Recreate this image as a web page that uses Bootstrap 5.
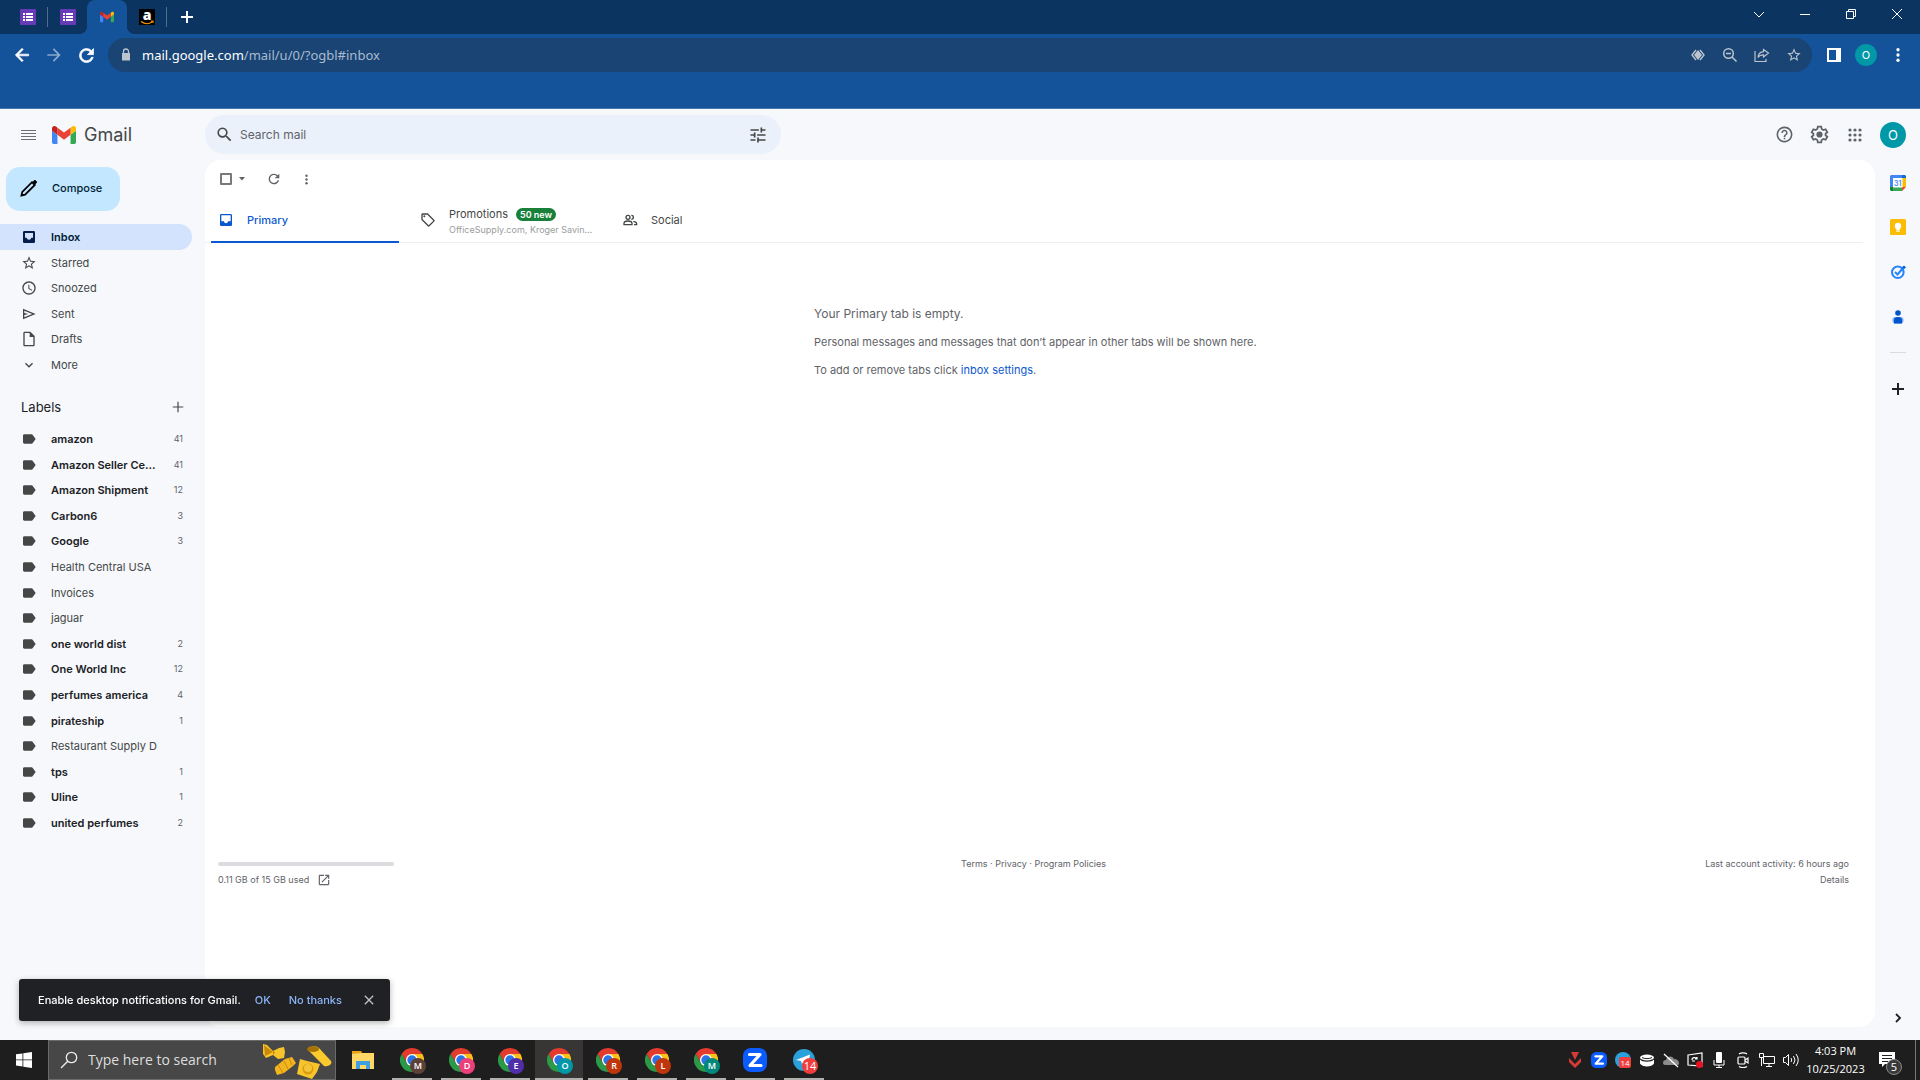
<!DOCTYPE html>
<html lang="en">
<head>
<meta charset="utf-8">
<meta name="viewport" content="width=device-width, initial-scale=1">
<title>Inbox - Gmail</title>
<link href="https://cdn.jsdelivr.net/npm/bootstrap@5.3.0/dist/css/bootstrap.min.css" rel="stylesheet">
<style>
  body { font-family: Inter, Roboto, "Liberation Sans", sans-serif; font-size: 11px; line-height: 16px; color: #444746; background: #f6f8fc; overflow: hidden; }
  svg { display: block; flex: none; }
  a { text-decoration: none; color: inherit; }
  .os-font { font-family: "Open Sans", "Noto Sans", sans-serif; }
  .ic { width: 16px; height: 16px; fill: currentColor; }
  .ic.ln { fill: none; }
  .ic-14 { width: 14px; height: 14px; fill: currentColor; }
  .ic-20 { width: 20px; height: 20px; fill: currentColor; }
  .icon-btn { display: inline-flex; align-items: center; justify-content: center; flex: none; padding: 0; border: 0; background: none; color: inherit; position: relative; }
  .face { border-radius: 50%; background: #0097a7; color: #fff; display: flex; align-items: center; justify-content: center; flex: none; }

  /* browser frame */
  .tab-strip { height: 34px; background: #0b3560; color: #fff; padding-left: 8px; }
  .tab-btn { width: 39px; height: 34px; }
  .tab-sep { width: 1px; height: 20px; background: #4f6e8d; }
  .tab-on { width: 40px; background: #14539a; border-radius: 8px 8px 0 0; }
  .tab-on::before, .tab-on::after { content: ""; position: absolute; bottom: 0; width: 8px; height: 8px; }
  .tab-on::before { right: 100%; background: radial-gradient(circle at 0 0, transparent 8px, #14539a 8px); }
  .tab-on::after { left: 100%; background: radial-gradient(circle at 100% 0, transparent 8px, #14539a 8px); }
  .win-btn { width: 46px; height: 28px; }
  .tool-strip { background: #14539a; color: #fff; height: 75px; padding: 4px 6px 0; border-bottom: 1px solid #4376ae; }
  .nav-btn { width: 32px; height: 34px; }
  .omni { height: 34px; border-radius: 17px; background: #194474; color: #bcc4cd; padding: 0 2px 0 10px; margin: 0 2px 0 6px; }
  .url-text { font-family: "Noto Sans", "Open Sans", sans-serif; font-size: 13px; color: #a9bbd0; }
  .url-text b { font-weight: 400; color: #fff; }

  /* mail header */
  .mail-head { height: 51px; padding-right: 14px; }
  .brand-side { width: 205px; padding-left: 20px; }
  .brand-name { font-size: 18px; color: #444746; }
  .search-pill { width: 576px; height: 39px; border-radius: 20px; background: #eaf1fb; padding: 0 13px 0 10px; }
  .search-pill input { border: 0; background: none; outline: 0; font-size: 12px; color: #444746; }
  .search-pill input::placeholder { color: #5f6368; opacity: 1; }
  .head-btn { width: 35px; height: 35px; color: #5f6368; }

  /* side navigation */
  .side-nav { width: 205px; flex: none; }
  .compose { width: 114px; height: 44px; border-radius: 14px; background: #c2e7ff; color: #001d35; margin: 7px 0 13px 6px; padding: 0 0 2px 14px; gap: 14px; font-weight: 500; border: 0; }
  .nav-rows a { height: 26px; width: 192px; padding: 0 9px 0 21px; gap: 14px; border-radius: 0 13px 13px 0; display: flex; align-items: center; }
  .nav-rows li:nth-child(5n+2) a, .nav-rows li:nth-child(5n+4) a { height: 25px; }
  .nav-rows .on { background: #d3e3fd; color: #001d35; font-weight: 600; }
  .nav-rows .unread { color: #202124; font-weight: 600; }
  .nav-rows .num { font-size: 9px; font-weight: 400; color: #5f6368; }
  .nav-rows svg { color: #444746; }
  .nav-rows .on svg { color: #041e49; }
  .labels-head { padding: 0 20px 0 21px; margin: 15px 0 6px; height: 27px; font-size: 13px; color: #202124; }

  /* message panel */
  .panel { background: #fff; border-radius: 16px; margin-bottom: 13px; padding-right: 12px; }
  .list-tools { height: 38px; padding-left: 15px; color: #5f6368; }
  .list-tools input { appearance: none; width: 12px; height: 12px; border: 2px solid #777a7d; border-radius: 1px; margin: 0 7px 0 0; background: #fff; }
  .list-tools .again { margin: 0 18px 0 21px; }
  .cat-tabs { height: 45px; border-bottom: 1px solid #eceff1; padding-left: 6px; gap: 14px; }
  .cat-tab { width: 188px; height: 45px; border: 0; background: none; padding: 0 8px 0 7px; gap: 13px; color: #444746; text-align: left; border-bottom: 2px solid transparent; font-weight: 400; }
  .cat-tab.on { color: #0b57d0; border-color: #0b57d0; font-weight: 500; }
  .new-pill { font-size: 9px; line-height: 13px; background: #188038; color: #fff; border-radius: 7px; padding: 0 4px; font-weight: 600; }
  .tab-sub { font-size: 9px; line-height: 15px; color: #9a9c9e; font-weight: 400; white-space: nowrap; }
  .empty-note { width: 440px; margin: 63px auto 0; color: #5f6368; white-space: nowrap; }
  .empty-note p { margin-bottom: 12px; }
  .empty-note .first { font-size: 12px; }
  .empty-note a { color: #0b57d0; }
  .panel-foot { font-size: 9px; color: #5f6368; padding: 0 14px 0 13px; margin-bottom: 139px; }
  .quota { width: 176px; height: 4px; border-radius: 2px; background: #dadce0; margin: 6px 0; }

  .rail { width: 45px; flex: none; padding-bottom: 13px; }
  .rail .icon-btn { width: 45px; height: 45px; }
  .rail .icon-btn:nth-child(2) { height: 44px; }
  .rail .icon-btn:last-child { height: 18px; }
  .rail-line { width: 16px; height: 1px; background: #dadce0; margin: 13px 0; }

  .notice { left: 19px; bottom: 59px; width: 371px; height: 42px; border-radius: 3px; background: #202124; color: #fff; padding: 0 13px 0 19px; box-shadow: 0 2px 6px rgba(0,0,0,.3); font-weight: 500; }
  .notice button { border: 0; background: none; padding: 0; color: #8ab4f8; font-weight: 500; }
  .notice .ok-btn { margin: 0 18px 0 14px; }
  .notice .close-x { color: #bdc1c6; margin-left: auto; }

  /* desktop task bar */
  .task-bar { height: 40px; background: #1f1e1e; color: #fff; }
  .start-btn { width: 48px; height: 40px; }
  .task-search { width: 288px; height: 40px; border: 1px solid #6a6a6a; background: #474747; padding: 0 3px 0 11px; margin-right: 3px; }
  .task-search input { border: 0; background: none; outline: 0; font-size: 14px; color: #e4e4e4; min-width: 0; }
  .task-search input::placeholder { color: #dedede; opacity: 1; }
  .app-btn { width: 48px; height: 40px; margin-right: 1px; }
  .app-btn.run::after { content: ""; position: absolute; left: 4px; right: 4px; bottom: 0; height: 2px; background: #b3b1ae; }
  .app-btn.on { background: #373635; }
  .app-btn.on::after { left: 0; right: 0; }
  .chip { position: absolute; left: 22px; top: 18px; width: 16px; height: 16px; font-size: 9px; font-weight: 600; }
  .chip-m { background: #5d4037; }
  .chip-d { background: #ec407a; }
  .chip-e { background: #512da8; }
  .chip-r { background: #bf360c; }
  .chip-g { background: #00897b; }
  .chip-n { background: #f03e3e; font-size: 11px; font-weight: 400; }
  .tray-btn { width: 24px; height: 40px; }
  .clock { width: 65px; font-size: 11px; line-height: 18px; }
  .note-btn { width: 48px; height: 40px; border-right: 1px solid #777; padding-right: 10px; margin-right: 4px; }
  .count-5 { position: absolute; left: 18px; top: 19px; width: 16px; height: 16px; background: #3a3a3a; border: 1px solid #8a8a8a; font-size: 11px; }
  .size-22 { width: 22px; height: 22px; }
  .size-26 { width: 26px; height: 26px; font-size: 13px; }
</style>
</head>
<body class="d-flex flex-column vh-100">

<svg width="0" height="0" class="position-absolute" aria-hidden="true">
  <symbol id="i-form" viewBox="0 0 16 16"><rect width="16" height="16" rx="1" fill="#673ab7"/><path fill="#fff" d="M3 4h2v2H3zM6 4h7v2H6zM3 7h2v2H3zM6 7h7v2H6zM3 10h2v2H3zM6 10h7v2H6z"/></symbol>
  <symbol id="i-gmail" viewBox="52 42 88 66"><path fill="#4285f4" d="M58 108h14V74L52 59v43c0 3.32 2.69 6 6 6"/><path fill="#34a853" d="M120 108h14c3.32 0 6-2.69 6-6V59l-20 15"/><path fill="#fbbc04" d="M120 48v26l20-15v-8c0-7.42-8.47-11.65-14.4-7.2"/><path fill="#ea4335" d="M72 74V48l24 18 24-18v26L96 92"/><path fill="#c5221f" d="M52 51v8l20 15V48l-5.6-4.2c-5.94-4.45-14.4-.22-14.4 7.2"/></symbol>
  <symbol id="i-back" viewBox="0 0 24 24"><path d="M20 11H7.83l5.59-5.59L12 4l-8 8 8 8 1.41-1.41L7.83 13H20v-2z" stroke="currentColor" stroke-width=".8"/></symbol>
  <symbol id="i-reload" viewBox="0 0 24 24"><path d="M17.65 6.35A7.958 7.958 0 0 0 12 4a8 8 0 1 0 7.73 10h-2.08A5.99 5.99 0 0 1 12 18a6 6 0 1 1 4.22-10.22L13 11h7V4l-2.35 2.35z"/></symbol>
  <symbol id="i-search" viewBox="0 0 24 24"><path d="M15.5 14h-.79l-.28-.27A6.471 6.471 0 0 0 16 9.5 6.5 6.5 0 1 0 9.5 16c1.61 0 3.09-.59 4.23-1.57l.27.28v.79l5 4.99L20.49 19l-4.99-5zm-6 0C7.01 14 5 11.99 5 9.5S7.01 5 9.5 5 14 7.01 14 9.5 11.99 14 9.5 14z"/></symbol>
  <symbol id="i-tune" viewBox="0 0 24 24"><path d="M3 17v2h6v-2H3zM3 5v2h10V5H3zm10 16v-2h8v-2h-8v-2h-2v6h2zM7 9v2H3v2h4v2h2V9H7zm14 4v-2H11v2h10zm-6-4h2V7h4V5h-4V3h-2v6z"/></symbol>
  <symbol id="i-dots" viewBox="0 0 24 24"><circle cx="12" cy="5" r="2.2"/><circle cx="12" cy="12" r="2.2"/><circle cx="12" cy="19" r="2.2"/></symbol>
  <symbol id="i-inbox" viewBox="0 0 24 24"><path d="M19 3H5c-1.1 0-2 .9-2 2v14c0 1.1.9 2 2 2h14c1.1 0 2-.9 2-2V5c0-1.1-.9-2-2-2zm0 11h-4c0 1.66-1.34 3-3 3s-3-1.34-3-3H5V5h14v9z"/></symbol>
  <symbol id="i-inbox-full" viewBox="0 0 24 24"><path d="M19 3H5a2 2 0 0 0-2 2v14c0 1.100.9 2 2 2h14a2 2 0 0 0 2-2V5a2 2 0 0 0-2-2zm-1 10h-2.500c-.3 1.700-1.700 3-3.500 3s-3.200-1.300-3.500-3H6V6h12v7z"/></symbol>
  <symbol id="i-star" viewBox="0 0 24 24"><path d="M22 9.24l-7.19-.62L12 2 9.19 8.63 2 9.24l5.46 4.73L5.82 21 12 17.27 18.18 21l-1.63-7.03L22 9.24zM12 15.4l-3.76 2.27 1-4.28-3.32-2.88 4.38-.38L12 6.1l1.71 4.04 4.38.38-3.32 2.88 1 4.28L12 15.4z"/></symbol>
  <symbol id="i-clock" viewBox="0 0 24 24"><path d="M11.99 2C6.47 2 2 6.48 2 12s4.47 10 9.99 10C17.52 22 22 17.52 22 12S17.52 2 11.99 2zM12 20c-4.42 0-8-3.58-8-8s3.58-8 8-8 8 3.58 8 8-3.58 8-8 8zm.5-13H11v6l5.25 3.15.75-1.23-4.5-2.67z"/></symbol>
  <symbol id="i-send" viewBox="0 0 24 24"><path d="M3 4v16l19-8L3 4zm2 3l11.850 5L5 17v-3.500l6-1.500-6-1.500V7z"/></symbol>
  <symbol id="i-file" viewBox="0 0 24 24"><path d="M14 1H5.500C4.400 1 3.500 1.900 3.500 3v18c0 1.100.9 2 2 2h13c1.100 0 2-.9 2-2V7.500L14 1zM5.500 21V3H13v6h5.500v12h-13z"/></symbol>
  <symbol id="i-more" viewBox="0 0 24 24"><path d="M16.590 8.590L12 13.170 7.410 8.590 6 10l6 6 6-6z"/></symbol>
  <symbol id="i-label" viewBox="0 0 24 24"><path d="M17.630 5.840C17.270 5.330 16.670 5 16 5L5 5.010C3.900 5.010 3 5.900 3 7v10c0 1.100.9 1.990 2 1.990L16 19c.67 0 1.270-.33 1.630-.84L22 12l-4.370-6.160z"/></symbol>
  <symbol id="i-plus" viewBox="0 0 24 24"><path d="M21 13h-8v8h-2v-8H3v-2h8V3h2v8h8v2z"/></symbol>
  <symbol id="i-tag" viewBox="0 0 24 24"><path d="M21.410 11.580l-9-9C12.050 2.220 11.550 2 11 2H4c-1.100 0-2 .9-2 2v7c0 .55.22 1.050.59 1.420l9 9c.36.36.86.58 1.410.58s1.050-.22 1.410-.59l7-7c.37-.36.59-.86.59-1.410s-.23-1.060-.59-1.420zM13 20.010L4 11V4h7v-.01l9 9-7 7.020z"/><circle cx="6.500" cy="6.500" r="1.500"/></symbol>
  <symbol id="i-people" viewBox="0 0 24 24"><g fill="none" stroke="currentColor" stroke-width="2"><circle cx="9" cy="8" r="3"/><path d="M3 19v-2c0-2 3-3.500 6-3.500s6 1.500 6 3.500v2zM14 5c4-.5 4 6 0 6M17 14c3 .5 5 1.500 5 3.500V19h-4"/></g></symbol>
  <symbol id="i-close" viewBox="0 0 24 24"><path d="M19 6.410L17.590 5 12 10.590 6.410 5 5 6.410 10.590 12 5 17.590 6.410 19 12 13.410 17.590 19 19 17.590 13.410 12z"/></symbol>
  <symbol id="i-chrome" viewBox="0 0 24 24"><path fill="#e33b2e" d="M12 0A12 12 0 0 1 22.400 6H12L6.800 15 1.600 6A12 12 0 0 1 12 0z"/><path fill="#fbc116" d="M22.400 6A12 12 0 0 1 12 24l5.200-9L12 6z"/><path fill="#2a9a48" d="M1.600 6 6.800 15h10.400L12 24A12 12 0 0 1 1.600 6z"/><circle cx="12" cy="12" r="6" fill="#fff"/><circle cx="12" cy="12" r="4.700" fill="#2b74e8"/></symbol>
  <symbol id="i-zoomapp" viewBox="0 0 24 24"><rect width="24" height="24" rx="8" fill="#0b5cff"/><path d="M6.500 6.500h10.500L7 17.500h11" fill="none" stroke="#fff" stroke-width="3.200" stroke-linejoin="round" stroke-linecap="round"/></symbol>
  <symbol id="i-plane" viewBox="0 0 24 24"><circle cx="12" cy="12" r="11" fill="#2ba0da"/><path fill="#fff" d="M4 12 18 6.500 16 17l-4-3-2 2-1-3z"/></symbol>
</svg>

<header>
  <div class="tab-strip d-flex align-items-center">
    <button class="icon-btn tab-btn" aria-label="Form tab 1"><svg class="ic"><use href="#i-form"/></svg></button>
    <span class="tab-sep"></span>
    <button class="icon-btn tab-btn" aria-label="Form tab 2"><svg class="ic"><use href="#i-form"/></svg></button>
    <button class="icon-btn tab-btn tab-on" aria-label="Gmail tab"><svg width="14" height="12"><use href="#i-gmail"/></svg></button>
    <button class="icon-btn tab-btn" aria-label="Amazon tab"><svg width="16" height="16" viewBox="0 0 16 16" overflow="visible"><rect width="16" height="16" fill="#000"/><text x="8" y="11" text-anchor="middle" font-family="Open Sans" font-weight="800" font-size="14" fill="#fff">a</text><path d="M2 12.500c3.500 2.600 8 2.600 11 .6M12 12h2v2" fill="none" stroke="#f90" stroke-width="1.200"/></svg></button>
    <span class="tab-sep"></span>
    <button class="icon-btn tab-btn" aria-label="New tab"><svg width="12" height="12" viewBox="0 0 12 12"><path d="M5 0h2v5h5v2H7v5H5V7H0V5h5z" fill="#fff"/></svg></button>
    <div class="ms-auto d-flex align-self-start">
      <button class="icon-btn win-btn" aria-label="Search tabs"><svg width="10" height="10" viewBox="0 0 10 10" fill="none" stroke="#fff"><path d="M0 3l5 5 5-5"/></svg></button>
      <button class="icon-btn win-btn" aria-label="Minimize"><svg width="10" height="10" viewBox="0 0 10 10" fill="none" stroke="#fff"><path d="M0 5.500h10"/></svg></button>
      <button class="icon-btn win-btn" aria-label="Restore"><svg width="10" height="10" viewBox="0 0 10 10" fill="none" stroke="#fff"><path d="M.5 2.500h7v7h-7zM2.500 2V.5h7v7H8"/></svg></button>
      <button class="icon-btn win-btn" aria-label="Close window"><svg width="10" height="10" viewBox="0 0 10 10" fill="none" stroke="#fff"><path d="M0 0l10 10M10 0L0 10"/></svg></button>
    </div>
  </div>
  <div class="tool-strip d-flex align-items-start">
    <button class="icon-btn nav-btn" aria-label="Back"><svg class="ic-20"><use href="#i-back"/></svg></button>
    <button class="icon-btn nav-btn opacity-50" aria-label="Forward"><svg class="ic-20" viewBox="0 0 24 24"><path d="M4 11h12.170l-5.590-5.590L12 4l8 8-8 8-1.410-1.410L16.170 13H4v-2z"/></svg></button>
    <button class="icon-btn nav-btn" aria-label="Reload"><svg width="21" height="21" fill="#fff" stroke="#fff" stroke-width=".8"><use href="#i-reload"/></svg></button>
    <div class="omni d-flex align-items-center flex-fill">
      <svg class="ic me-2" viewBox="0 0 16 16"><path d="M4 6h8v7.500H4z"/><path d="M5.500 6V4.500a2.500 2.500 0 0 1 5 0V6" fill="none" stroke="currentColor" stroke-width="1.300"/></svg>
      <a href="#inbox" class="url-text flex-fill"><b>mail.google.com</b>/mail/u/0/?ogbl#inbox</a>
      <button class="icon-btn nav-btn" aria-label="View"><svg width="14" height="12" viewBox="0 0 14 12"><path d="M5 1 1 6l4 5M9 1l4 5-4 5" fill="none" stroke="currentColor" stroke-width="1.400"/><path d="M7 1l4 5-4 5-4-5z" fill="currentColor"/></svg></button>
      <button class="icon-btn nav-btn" aria-label="Zoom"><svg class="ic ln" viewBox="0 0 16 16" stroke="currentColor" stroke-width="1.500"><circle cx="6.500" cy="6.500" r="4.800"/><path d="M10 10l4.500 4.500M4 6.500h5"/></svg></button>
      <button class="icon-btn nav-btn" aria-label="Share"><svg class="ic ln" viewBox="0 0 16 16"><path d="M1 4v10.500h11V12M9.500 2.500 14.500 6l-5 4V7.800C7 7.800 5 8.600 4 10.500c.3-3.200 2-5.500 5.500-5.800z" stroke="currentColor" stroke-width="1.200"/></svg></button>
      <button class="icon-btn nav-btn" aria-label="Bookmark"><svg class="ic"><use href="#i-star"/></svg></button>
    </div>
    <button class="icon-btn nav-btn ms-1" aria-label="Side panel"><svg width="14" height="14" viewBox="0 0 14 14"><path fill="#fff" fill-rule="evenodd" d="M0 0h14v14H0zM2 2v10h7V2z"/></svg></button>
    <button class="icon-btn nav-btn" aria-label="Profile"><span class="face size-22">O</span></button>
    <button class="icon-btn nav-btn" aria-label="Browser menu"><svg width="18" height="18" fill="#fff"><use href="#i-dots"/></svg></button>
  </div>
</header>

<div class="mail-head d-flex align-items-center">
  <div class="brand-side d-flex align-items-center">
    <button class="icon-btn me-3" aria-label="Main menu"><svg class="ic" viewBox="0 0 16 16"><path fill="#6b6f73" d="M1 3h15v1H1zM1 6h15v1H1zM1 9h15v1H1zM1 12h15v1H1z"/></svg></button>
    <a href="#inbox" class="d-flex align-items-center gap-2"><svg width="24" height="18"><use href="#i-gmail"/></svg><span class="brand-name">Gmail</span></a>
  </div>
  <form class="search-pill d-flex align-items-center" role="search">
    <button type="button" class="icon-btn" aria-label="Search"><svg width="19" height="19" fill="#444746"><use href="#i-search"/></svg></button>
    <input type="text" class="flex-fill ms-1" placeholder="Search mail" aria-label="Search mail">
    <button type="button" class="icon-btn" aria-label="Search options"><svg width="20" height="20" fill="#444746"><use href="#i-tune"/></svg></button>
  </form>
  <div class="ms-auto d-flex align-items-center">
    <button class="icon-btn head-btn" aria-label="Support"><svg width="19" height="19" viewBox="0 0 24 24" fill="currentColor"><path d="M11 18h2v-2h-2v2zm1-16C6.480 2 2 6.480 2 12s4.480 10 10 10 10-4.480 10-10S17.520 2 12 2zm0 18c-4.410 0-8-3.590-8-8s3.590-8 8-8 8 3.590 8 8-3.590 8-8 8zm0-14c-2.210 0-4 1.790-4 4h2c0-1.100.9-2 2-2s2 .9 2 2c0 2-3 1.750-3 5h2c0-2.250 3-2.500 3-5 0-2.210-1.790-4-4-4z"/></svg></button>
    <button class="icon-btn head-btn" aria-label="Settings"><svg width="19" height="19" viewBox="1 1 22 22"><path fill="none" stroke="currentColor" stroke-width="2" d="M10 3h4l.5 2.700 2 1.200 2.600-1 2 3.500-2.100 1.700v1.800l2.100 1.700-2 3.500-2.600-1-2 1.200L14 21h-4l-.5-2.700-2-1.200-2.600 1-2-3.500L5 12.900v-1.800L2.900 9.400l2-3.500 2.600 1 2-1.200z"/><circle cx="12" cy="12" r="3.600" fill="currentColor"/></svg></button>
    <button class="icon-btn head-btn me-2" aria-label="Google apps"><svg width="14" height="14" viewBox="0 0 14 14" fill="currentColor"><circle cx="2" cy="2" r="1.600"/><circle cx="7" cy="2" r="1.600"/><circle cx="12" cy="2" r="1.600"/><circle cx="2" cy="7" r="1.600"/><circle cx="7" cy="7" r="1.600"/><circle cx="12" cy="7" r="1.600"/><circle cx="2" cy="12" r="1.600"/><circle cx="7" cy="12" r="1.600"/><circle cx="12" cy="12" r="1.600"/></svg></button>
    <button class="icon-btn" aria-label="Google account"><span class="face size-26">O</span></button>
  </div>
</div>

<div class="d-flex flex-fill">
  <nav class="side-nav">
    <button class="compose d-flex align-items-center"><svg width="18" height="18" viewBox="0 0 18 18"><path d="M1.500 16.500l.8-3.600L12 3.200 14.800 6 5.100 15.700z" fill="none" stroke="#000" stroke-width="1.800"/><path d="M12.500 3 14 1.500c.6-.6 1.200-.6 1.800 0l.8.800c.6.6.6 1.200 0 1.800L15 5.600z"/></svg>Compose</button>
    <ul class="nav-rows list-unstyled mb-0">
      <li><a class="on" href="#inbox"><svg class="ic"><use href="#i-inbox-full"/></svg>Inbox</a></li>
      <li><a href="#"><svg class="ic"><use href="#i-star"/></svg>Starred</a></li>
      <li><a href="#"><svg class="ic"><use href="#i-clock"/></svg>Snoozed</a></li>
      <li><a href="#"><svg class="ic"><use href="#i-send"/></svg>Sent</a></li>
      <li><a href="#"><svg class="ic"><use href="#i-file"/></svg>Drafts</a></li>
      <li><a href="#"><svg class="ic"><use href="#i-more"/></svg>More</a></li>
    </ul>
    <div class="labels-head d-flex align-items-center justify-content-between"><span>Labels</span><button class="icon-btn" aria-label="Create new label"><svg width="14" height="14" fill="#444746"><use href="#i-plus"/></svg></button></div>
    <ul class="nav-rows list-unstyled mb-0">
      <li><a class="unread" href="#"><svg class="ic"><use href="#i-label"/></svg><span>amazon</span><span class="num ms-auto">41</span></a></li>
      <li><a class="unread" href="#"><svg class="ic"><use href="#i-label"/></svg><span>Amazon Seller Ce…</span><span class="num ms-auto">41</span></a></li>
      <li><a class="unread" href="#"><svg class="ic"><use href="#i-label"/></svg><span>Amazon Shipment</span><span class="num ms-auto">12</span></a></li>
      <li><a class="unread" href="#"><svg class="ic"><use href="#i-label"/></svg><span>Carbon6</span><span class="num ms-auto">3</span></a></li>
      <li><a class="unread" href="#"><svg class="ic"><use href="#i-label"/></svg><span>Google</span><span class="num ms-auto">3</span></a></li>
      <li><a href="#"><svg class="ic"><use href="#i-label"/></svg><span>Health Central USA</span></a></li>
      <li><a href="#"><svg class="ic"><use href="#i-label"/></svg><span>Invoices</span></a></li>
      <li><a href="#"><svg class="ic"><use href="#i-label"/></svg><span>jaguar</span></a></li>
      <li><a class="unread" href="#"><svg class="ic"><use href="#i-label"/></svg><span>one world dist</span><span class="num ms-auto">2</span></a></li>
      <li><a class="unread" href="#"><svg class="ic"><use href="#i-label"/></svg><span>One World Inc</span><span class="num ms-auto">12</span></a></li>
      <li><a class="unread" href="#"><svg class="ic"><use href="#i-label"/></svg><span>perfumes america</span><span class="num ms-auto">4</span></a></li>
      <li><a class="unread" href="#"><svg class="ic"><use href="#i-label"/></svg><span>pirateship</span><span class="num ms-auto">1</span></a></li>
      <li><a href="#"><svg class="ic"><use href="#i-label"/></svg><span>Restaurant Supply D</span></a></li>
      <li><a class="unread" href="#"><svg class="ic"><use href="#i-label"/></svg><span>tps</span><span class="num ms-auto">1</span></a></li>
      <li><a class="unread" href="#"><svg class="ic"><use href="#i-label"/></svg><span>Uline</span><span class="num ms-auto">1</span></a></li>
      <li><a class="unread" href="#"><svg class="ic"><use href="#i-label"/></svg><span>united perfumes</span><span class="num ms-auto">2</span></a></li>
    </ul>
  </nav>

  <main class="panel flex-fill d-flex flex-column">
    <div class="list-tools d-flex align-items-center">
      <input type="checkbox" aria-label="Select all">
      <button class="icon-btn" aria-label="Select options"><svg width="6" height="4" viewBox="0 0 6 4" fill="currentColor"><path d="M0 0h6L3 3.500z"/></svg></button>
      <button class="icon-btn again" aria-label="Refresh"><svg width="16" height="16" fill="currentColor"><use href="#i-reload"/></svg></button>
      <button class="icon-btn" aria-label="More actions"><svg width="13" height="13" fill="currentColor"><use href="#i-dots"/></svg></button>
    </div>
    <div class="cat-tabs d-flex" role="tablist">
      <button class="cat-tab on d-flex align-items-center" role="tab" aria-selected="true"><svg class="ic"><use href="#i-inbox"/></svg>Primary</button>
      <button class="cat-tab d-flex align-items-center" role="tab"><svg class="ic"><use href="#i-tag"/></svg><span class="pt-1"><span class="d-flex align-items-center gap-2">Promotions <span class="new-pill">50 new</span></span><span class="tab-sub d-block">OfficeSupply.com, Kroger Savin…</span></span></button>
      <button class="cat-tab d-flex align-items-center" role="tab"><svg class="ic"><use href="#i-people"/></svg>Social</button>
    </div>
    <section class="empty-note">
      <p class="first">Your Primary tab is empty.</p>
      <p>Personal messages and messages that don’t appear in other tabs will be shown here.</p>
      <p>To add or remove tabs click <a href="#">inbox settings</a>.</p>
    </section>
    <footer class="panel-foot row g-0 mt-auto">
      <div class="col"><div class="quota"></div><a href="#" class="d-flex align-items-center gap-2">0.11 GB of 15 GB used <svg class="ic-14" viewBox="0 0 24 24"><path d="M19 19H5V5h7V3H5c-1.110 0-2 .9-2 2v14c0 1.100.89 2 2 2h14c1.100 0 2-.9 2-2v-7h-2v7zM14 3v2h3.590l-9.830 9.830 1.410 1.410L19 6.410V10h2V3h-7z"/></svg></a></div>
      <div class="col text-center"><a href="#">Terms</a> · <a href="#">Privacy</a> · <a href="#">Program Policies</a></div>
      <div class="col text-end"><div>Last account activity: 6 hours ago</div><a href="#">Details</a></div>
    </footer>
  </main>

  <aside class="rail d-flex flex-column align-items-center">
    <button class="icon-btn" aria-label="Calendar"><svg class="ic" viewBox="0 0 16 16"><path fill="#4285f4" d="M1 0h11v3H3v10H0V1z"/><path fill="#1967d2" d="M12 0h3l1 1v2h-4z"/><path fill="#fbbc04" d="M12 3h4v9h-4z"/><path fill="#34a853" d="M3 12h9v4H3z"/><path fill="#188038" d="M0 12h3v4H1l-1-1z"/><path fill="#ea4335" d="M12 12h4l-4 4z"/><path fill="#fff" d="M3 3h9.500v9.500H3z"/><text x="7.800" y="10.500" font-size="7" font-weight="600" text-anchor="middle" fill="#4285f4">31</text></svg></button>
    <button class="icon-btn" aria-label="Keep"><svg class="ic" viewBox="0 0 16 16"><rect width="16" height="16" rx="1.500" fill="#fbbc04"/><circle cx="8" cy="7" r="3.200" fill="#fff"/><path fill="#fff" d="M6.300 9h3.400v2H6.300zM6.300 11.500h3.400v1.200H6.300z"/></svg></button>
    <button class="icon-btn" aria-label="Tasks"><svg class="ic ln" viewBox="0 0 16 16"><circle cx="7.800" cy="8.300" r="5.800" stroke="#2684fc" stroke-width="2"/><path d="M5 8l2.500 2.500L14 3" stroke="#2684fc" stroke-width="2"/><circle cx="14" cy="3.300" r="1.500" fill="#0066da"/></svg></button>
    <button class="icon-btn" aria-label="Contacts"><svg class="ic" viewBox="0 0 16 16"><circle cx="8" cy="4" r="2.800" fill="#0057cc"/><rect x="2.500" y="8" width="11" height="6.500" rx="3" fill="#7baaf7"/><path d="M4 14.500V11c0-2 1.500-3 4-3s4 1 4 3v3.500z" fill="#0057cc"/></svg></button>
    <div class="rail-line"></div>
    <button class="icon-btn" aria-label="Get add-ons"><svg width="15" height="15" viewBox="0 0 15 15"><path fill="#202124" d="M7 2h2v5h5v2H9v5H7V9H2V7h5z"/></svg></button>
    <button class="icon-btn mt-auto" aria-label="Hide side panel"><svg width="8" height="10" viewBox="0 0 8 10"><path d="M2 1l4 4-4 4" fill="none" stroke="#202124" stroke-width="1.800"/></svg></button>
  </aside>
</div>

<div class="notice position-fixed d-flex align-items-center" role="alert">
  <span>Enable desktop notifications for Gmail.</span><button class="ok-btn">OK</button><button>No thanks</button><button class="close-x" aria-label="Close"><svg class="ic"><use href="#i-close"/></svg></button>
</div>

<footer class="task-bar d-flex align-items-center os-font">
  <button class="icon-btn start-btn" aria-label="Start"><svg class="ic" viewBox="0 0 16 16"><path d="M0 2.300 6.500 1.400v6.100H0zM7.300 1.300 16 0v7.500H7.300zM0 8.300h6.500v6.200L0 13.600zM7.300 8.300H16V16l-8.700-1.300z"/></svg></button>
  <div class="task-search d-flex align-items-center">
    <svg width="18" height="18" viewBox="0 0 18 18" fill="none" stroke="#eee" stroke-width="1.300"><circle cx="11.500" cy="6.500" r="5.200"/><path d="M7.700 10.300 1 17"/></svg>
    <input type="text" class="flex-fill ms-2" placeholder="Type here to search" aria-label="Type here to search">
    <svg width="72" height="38" viewBox="0 0 72 38"><path fill="#f7c52b" d="M3 3l4 1 6 6 6-3 5-1 1 5-1 6-6 1-5-4-7 3-3-4z"/><path fill="#c98a08" d="M4 4l9 7-8 4zM13 9l2 3-2 2z"/><path fill="#f2b51f" d="M15 26l10-8 7-2 4 6-3 3-9 7-7 2-2-5z"/><path fill="none" stroke="#c98a08" d="M18 24l5 8M24 20l4 8M29 17l3 7"/><path fill="#f7c52b" d="M40 18l7 2 13 3-3 8-5 7-15-5z"/><circle cx="48" cy="28" r="5.500" fill="#d99d10"/><circle cx="48" cy="27" r="4" fill="#f5c436"/><path fill="#fbca2c" d="M48 9c2-4 8-5 11-2l12 13c2 4-5 6-7 5z"/><ellipse cx="53" cy="8" rx="6" ry="3" fill="#a87306"/></svg>
  </div>
  <button class="icon-btn app-btn" aria-label="File Explorer"><svg width="22" height="20" viewBox="0 0 22 20"><path fill="#e8a317" d="M0 1h9l2 3H0z"/><path fill="#ffd767" d="M0 4l10-1h12v16H0z"/><path fill="#3f9fe0" d="M4 11h14v8h-4v-4H8v4H4z"/></svg></button>
  <button class="icon-btn app-btn run" aria-label="Chrome M"><svg width="24" height="24"><use href="#i-chrome"/></svg><span class="face chip chip-m">M</span></button>
  <button class="icon-btn app-btn run" aria-label="Chrome D"><svg width="24" height="24"><use href="#i-chrome"/></svg><span class="face chip chip-d">D</span></button>
  <button class="icon-btn app-btn run" aria-label="Chrome E"><svg width="24" height="24"><use href="#i-chrome"/></svg><span class="face chip chip-e">E</span></button>
  <button class="icon-btn app-btn run on" aria-label="Chrome O"><svg width="24" height="24"><use href="#i-chrome"/></svg><span class="face chip">O</span></button>
  <button class="icon-btn app-btn run" aria-label="Chrome R"><svg width="24" height="24"><use href="#i-chrome"/></svg><span class="face chip chip-r">R</span></button>
  <button class="icon-btn app-btn run" aria-label="Chrome L"><svg width="24" height="24"><use href="#i-chrome"/></svg><span class="face chip chip-r">L</span></button>
  <button class="icon-btn app-btn run" aria-label="Chrome M2"><svg width="24" height="24"><use href="#i-chrome"/></svg><span class="face chip chip-g">M</span></button>
  <button class="icon-btn app-btn run" aria-label="Zoom"><svg width="24" height="24"><use href="#i-zoomapp"/></svg></button>
  <button class="icon-btn app-btn run" aria-label="Telegram"><svg width="24" height="24"><use href="#i-plane"/></svg><span class="face chip chip-n">14</span></button>

  <div class="ms-auto d-flex align-items-center">
    <button class="icon-btn tray-btn" aria-label="Antivirus"><svg class="ic" viewBox="0 0 16 16"><path fill="#d63a35" d="M4 0h8L8 8zM2 6l6 6 6-6v4l-6 6-6-6z"/></svg></button>
    <button class="icon-btn tray-btn" aria-label="Zoom"><svg class="ic"><use href="#i-zoomapp"/></svg></button>
    <button class="icon-btn tray-btn" aria-label="Telegram 14"><svg class="ic" viewBox="0 0 16 16"><circle cx="8" cy="8" r="8" fill="#2ba0da"/><rect x="4" y="5" width="12" height="11" rx="2" fill="#f03e3e"/><text x="10" y="14" font-size="8" text-anchor="middle" fill="#fff">14</text></svg></button>
    <button class="icon-btn tray-btn" aria-label="Drive"><svg class="ic" viewBox="0 0 16 16"><ellipse cx="8" cy="5.500" rx="7" ry="3"/><path d="M1 7.500c2 3 12 3 14 0v4c-2 4-12 4-14 0z"/><path d="M3 5.500c2 1.500 8 1.500 10 0" stroke="#222" fill="none"/></svg></button>
    <button class="icon-btn tray-btn" aria-label="OneDrive"><svg class="ic" viewBox="0 0 16 16"><path fill="#8c8c8c" d="M0 11c0-2 1-3 3-3 1-4 6-5 8-1 3 0 5 2 5 4s-1 2-2 2H2c-1 0-2-1-2-2z"/><path stroke="#fff" stroke-width="1.300" d="M1 2l14 13"/></svg></button>
    <button class="icon-btn tray-btn" aria-label="Update"><svg class="ic ln" viewBox="0 0 16 16"><path d="M1 3l14-2v13l-14-1zM5 8c0-3 4-3 5-1M5 9h3M10 5v2H8" stroke="#fff" stroke-width="1.200"/><circle cx="12.500" cy="12.500" r="3.500" fill="#e81123"/></svg></button>
    <button class="icon-btn tray-btn" aria-label="Microphone"><svg class="ic" viewBox="0 0 16 16"><rect x="5" y="0" width="6" height="11" rx="1"/><path d="M3 8v5h10V8M8 13v3M5 15.500h6" fill="none" stroke="#fff"/></svg></button>
    <button class="icon-btn tray-btn" aria-label="Meet Now"><svg class="ic ln" viewBox="0 0 16 16" stroke="#fff" stroke-width="1.200"><rect x="3" y="5" width="7" height="7" rx="1"/><path d="M10 8l3-2v5l-3-2M4 2c2-1.500 6-1.500 8 0M4 14.500c2 1.500 6 1.500 8 0"/></svg></button>
    <button class="icon-btn tray-btn" aria-label="Network"><svg class="ic ln" viewBox="0 0 16 16" stroke="#fff"><path d="M5 4.500h10.500v7H4.500V5M.5 1.500h4v4h-4zM2.500 6v8M7 14.500h6M10 12v2"/></svg></button>
    <button class="icon-btn tray-btn" aria-label="Volume"><svg class="ic ln" viewBox="0 0 16 16" stroke="#fff"><path d="M.5 5.500h2l3-3v11l-3-3h-2zM8 6q1.500 2 0 4M10.500 4q3 4 0 8M13 2q4.500 6 0 12"/></svg></button>
    <time class="clock text-center">4:03 PM<br>10/25/2023</time>
    <button class="icon-btn note-btn" aria-label="5 notifications"><svg class="ic" viewBox="0 0 16 16"><path d="M0 0h16v12H6l-3 3v-3H0z"/><path stroke="#222" d="M3 3.500h10M3 6.500h10M3 9.500h6"/></svg><span class="face count-5">5</span></button>
  </div>
</footer>
<script src="https://cdn.jsdelivr.net/npm/bootstrap@5.3.0/dist/js/bootstrap.bundle.min.js"></script>
</body>
</html>
